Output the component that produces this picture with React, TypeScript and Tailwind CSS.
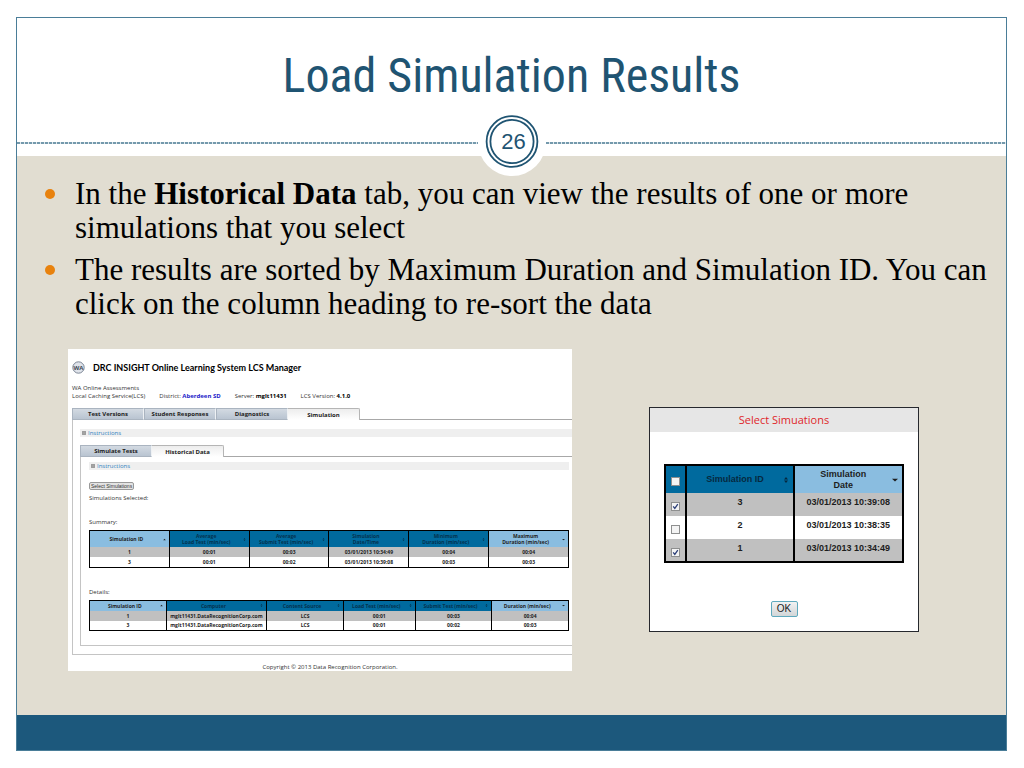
import { useState } from "react";

const summaryHead = [
  ["Simulation ID"],
  ["Average", "Load Test (min/sec)"],
  ["Average", "Submit Test (min/sec)"],
  ["Simulation", "Date/Time"],
  ["Minimum", "Duration (min/sec)"],
  ["Maximum", "Duration (min/sec)"],
];

const summaryRows = [
  ["1", "00:01", "00:03", "03/01/2013 10:34:49", "00:04", "00:04"],
  ["3", "00:01", "00:02", "03/01/2013 10:39:08", "00:03", "00:03"],
];

const detailHead = [
  ["Simulation ID"],
  ["Computer"],
  ["Content Source"],
  ["Load Test (min/sec)"],
  ["Submit Test (min/sec)"],
  ["Duration (min/sec)"],
];

const detailRows = [
  ["1", "mglt11431.DataRecognitionCorp.com", "LCS", "00:01", "00:03", "00:04"],
  ["3", "mglt11431.DataRecognitionCorp.com", "LCS", "00:01", "00:02", "00:03"],
];

const Arrow = ({ kind, className }: { kind: string; className: string }) => (
  <svg className={className} viewBox="0 0 6 6" fill="currentColor">
    {kind === "up" && <path d="M0.5 4.5 L3 1.5 L5.5 4.5 Z" />}
    {kind === "down" && <path d="M0 1.8 H6 L3 4.6 Z" />}
    {kind === "both" && <path d="M1 2.6 L3 0 L5 2.6 Z M1 3.4 L3 6 L5 3.4 Z" />}
  </svg>
);

const Dashes = () => (
  <div className="mt-[2px] h-[2px] flex-1 bg-[repeating-linear-gradient(90deg,#7499ac_0_3px,#dfe8ed_3px_4px)]" />
);

const Badge = () => (
  <div className="relative flex size-17 items-center justify-center rounded-full bg-white">
    <svg
      className="absolute inset-0 size-full"
      viewBox="0 0 68 68"
      fill="none"
      stroke="#1f5472"
    >
      <circle cx="34" cy="33.5" r="25.4" strokeWidth="1.8" />
      <circle cx="34" cy="33.5" r="21.6" strokeWidth="1.8" />
    </svg>
    <span className="relative pl-1 font-['Liberation_Sans'] text-[22px] leading-6 text-[#1f5472]">
      26
    </span>
  </div>
);

const Instructions = () => (
  <a
    href="#instructions"
    className="flex h-2 items-center gap-[2px] bg-[#efefef] pl-[2px] text-[6px] leading-2 text-[#2f7fc0]"
  >
    <svg className="size-[4px]" viewBox="0 0 5 5" fill="none" stroke="#555">
      <path d="M0.5 0.5 H4.5 V4.5 H0.5 Z M1 2.5 H4 M2.5 1 V4" strokeWidth="0.7" />
    </svg>
    Instructions
  </a>
);

const Tabs = ({ names, active }: { names: string[]; active: string }) => (
  <div className="flex">
    {names.map((name) => (
      <button
        key={name}
        className={
          name === active
            ? "h-3 w-[72px] rounded-tr-xs border-t border-r border-[#b5b5b5] bg-linear-to-b from-[#ededed] to-white text-[6px] leading-[10px] font-bold text-[#222]"
            : "h-3 w-[72px] border border-r-[#eef1f4] border-[#aab4c0] bg-linear-to-b from-[#d3dae2] to-[#b9c4d1] text-[6px] leading-[10px] font-bold text-[#222]"
        }
      >
        {name}
      </button>
    ))}
    <div className="flex-1 border-b border-[#a8a8a8]" />
  </div>
);

const ResultTable = ({
  label,
  head,
  rows,
  light,
  cols,
}: {
  label: string;
  head: string[][];
  rows: string[][];
  light: number[];
  cols: string[];
}) => (
  <table
    aria-label={label}
    className="w-full table-fixed border-collapse border border-black text-center text-[5px] leading-[6px] font-bold text-[#222]"
  >
    <colgroup>
      {cols.map((c, i) => (
        <col key={i} className={c} />
      ))}
    </colgroup>
    <thead>
      <tr>
        {head.map((lines, i) => (
          <th
            key={i}
            className={
              light.includes(i)
                ? "border-x border-black bg-[#8abde0] p-0"
                : "border-x border-black bg-[#006a9e] p-0 text-[#04324f]"
            }
          >
            <button className="flex w-full items-center py-[2px] pr-[3px] font-bold whitespace-nowrap">
              <span className="flex-1">
                {lines.map((l) => (
                  <span key={l} className="block">
                    {l}
                  </span>
                ))}
              </span>
              <Arrow
                kind={i === 0 ? "up" : i === head.length - 1 ? "down" : "both"}
                className="size-[3px]"
              />
            </button>
          </th>
        ))}
      </tr>
    </thead>
    <tbody>
      {rows.map((row, r) => (
        <tr key={r} className={r % 2 === 0 ? "bg-[#c0c0c0]" : "bg-white"}>
          {row.map((cell, i) => (
            <td
              key={i}
              className="h-[10px] border-x border-black p-0 whitespace-nowrap"
            >
              {cell}
            </td>
          ))}
        </tr>
      ))}
    </tbody>
  </table>
);

const Manager = () => (
  <section className="overflow-hidden bg-white pt-3 pl-1 font-['Open_Sans',sans-serif] text-[6px] leading-2 text-[#333]">
    <div className="flex items-center gap-2">
      <svg className="size-[13px]" viewBox="0 0 13 13">
        <circle cx="6.5" cy="6.5" r="5.7" fill="#dfe3ea" stroke="#7c8695" />
        <text
          x="6.5"
          y="8.6"
          textAnchor="middle"
          fontSize="6"
          fontWeight="bold"
          fill="#3f4957"
        >
          WA
        </text>
      </svg>
      <h2 className="font-[Lato] text-[9px] leading-3 font-bold text-black">
        DRC INSIGHT Online Learning System LCS Manager
      </h2>
    </div>
    <p className="mt-[10px]">WA Online Assessments</p>
    <div className="flex gap-[14px]">
      <span>Local Caching Service(LCS)</span>
      <span>
        District: <b className="text-[#1a1ac8]">Aberdeen SD</b>
      </span>
      <span>
        Server: <b className="text-black">mglt11431</b>
      </span>
      <span>
        LCS Version: <b className="text-black">4.1.0</b>
      </span>
    </div>
    <div className="mt-2">
      <Tabs
        names={["Test Versions", "Student Responses", "Diagnostics", "Simulation"]}
        active="Simulation"
      />
      <div className="border-b border-l border-[#c4c4c4] pt-[9px] pb-2 pl-[7px]">
        <Instructions />
        <div className="mt-2">
          <Tabs
            names={["Simulate Tests", "Historical Data"]}
            active="Historical Data"
          />
          <div className="border-b border-l border-[#c4c4c4] pt-[5px] pr-[3px] pb-[14px] pl-2">
            <Instructions />
            <button className="mt-3 block h-2 rounded-xs border border-[#999] bg-[#e4e4e4] px-[1px] font-['Liberation_Sans',sans-serif] text-[5px] leading-[6px] text-[#333]">
              Select Simulations
            </button>
            <p className="mt-1">Simulations Selected:</p>
            <p className="mt-4 mb-1">Summary:</p>
            <ResultTable
              label="Summary"
              head={summaryHead}
              rows={summaryRows}
              light={[0, 5]}
              cols={["w-1/6", "w-1/6", "w-1/6", "w-1/6", "w-1/6", "w-1/6"]}
            />
            <p className="mt-5 mb-1">Details:</p>
            <ResultTable
              label="Details"
              head={detailHead}
              rows={detailRows}
              light={[0, 5]}
              cols={["w-[16%]", "w-[21%]", "w-[16%]", "w-[15%]", "w-[16%]", "w-[16%]"]}
            />
          </div>
        </div>
      </div>
    </div>
    <p className="mt-2 pl-4 text-center">
      Copyright © 2013 Data Recognition Corporation.
    </p>
  </section>
);

const Check = ({
  label,
  checked,
  onChange,
}: {
  label: string;
  checked: boolean;
  onChange: () => void;
}) => (
  <label className="relative mx-auto mt-1 block size-[9px]">
    <input
      type="checkbox"
      aria-label={label}
      checked={checked}
      onChange={onChange}
      className="block size-[9px] appearance-none border border-[#8e8f8f] bg-[#f4f4f4]"
    />
    {checked && (
      <svg
        className="pointer-events-none absolute inset-0 size-[9px]"
        viewBox="0 0 9 9"
        fill="none"
        stroke="#2c3f78"
        strokeWidth="1.3"
      >
        <path d="M2.2 4.4 L3.8 6.4 L6.8 2.2" />
      </svg>
    )}
  </label>
);

const sims = [
  { id: 3, date: "03/01/2013 10:39:08" },
  { id: 2, date: "03/01/2013 10:38:35" },
  { id: 1, date: "03/01/2013 10:34:49" },
];

const SelectDialog = () => {
  const [picked, setPicked] = useState([3, 1]);
  const toggle = (id: number) =>
    setPicked(
      picked.includes(id) ? picked.filter((p) => p !== id) : [...picked, id],
    );
  const all = picked.length === sims.length;

  return (
    <section className="mt-[58px] self-start border border-[#26282e] bg-white">
      <h2 className="bg-[#e6e6e6] text-center font-['Open_Sans',sans-serif] text-[11px] leading-6 text-[#e0262b]">
        Select Simuations
      </h2>
      <div className="mt-8 px-[14px]">
        <table className="w-full table-fixed border-collapse border-2 border-black text-center font-['Liberation_Sans',sans-serif] text-[9px] leading-[11px] font-bold text-[#1d1d1d]">
          <colgroup>
            <col className="w-[9%]" />
            <col className="w-[45%]" />
            <col className="w-[46%]" />
          </colgroup>
          <thead>
            <tr className="h-7">
              <th className="border-x-2 border-black bg-[#006a9e] p-0">
                <Check
                  label="Select all"
                  checked={all}
                  onChange={() => setPicked(all ? [] : sims.map((s) => s.id))}
                />
              </th>
              <th className="border-x-2 border-black bg-[#006a9e] p-0 text-[#06293f]">
                <button className="flex w-full items-center pr-1 font-bold">
                  <span className="flex-1">Simulation ID</span>
                  <Arrow kind="both" className="size-[6px]" />
                </button>
              </th>
              <th className="border-x-2 border-black bg-[#8abde0] p-0">
                <button className="flex w-full items-center pr-1 font-bold">
                  <span className="flex-1">
                    Simulation
                    <br />
                    Date
                  </span>
                  <Arrow kind="down" className="size-[6px]" />
                </button>
              </th>
            </tr>
          </thead>
          <tbody>
            {sims.map((s, i) => (
              <tr
                key={s.id}
                className={i % 2 === 0 ? "h-[23px] bg-[#c0c0c0]" : "h-[23px] bg-white"}
              >
                <td className="border-x-2 border-black p-0">
                  <Check
                    label={`Simulation ${s.id}`}
                    checked={picked.includes(s.id)}
                    onChange={() => toggle(s.id)}
                  />
                </td>
                <td className="border-x-2 border-black p-0 pb-1">{s.id}</td>
                <td className="border-x-2 border-black p-0 pb-1">{s.date}</td>
              </tr>
            ))}
          </tbody>
        </table>
      </div>
      <div className="mt-[38px] mb-[14px] flex justify-center">
        <button className="h-4 w-[27px] rounded-xs border border-[#5fa9bd] bg-linear-to-b from-[#f2f2f2] to-[#d2d6d8] font-['Liberation_Sans',sans-serif] text-[10px] leading-3 text-[#222]">
          OK
        </button>
      </div>
    </section>
  );
};

const App = () => {
  return (
    <div className="flex min-h-screen flex-col bg-white py-[17px] pr-[17px] pl-4">
      <main className="flex flex-1 flex-col border border-[#4a7d98]">
        <h1 className="pt-7 pb-[2px] text-center font-['Roboto_Condensed','Liberation_Sans',sans-serif] text-[48px] leading-[60px] text-[#1f5472]">
          Load Simulation Results
        </h1>
        <div className="relative z-10 -mb-5 flex items-center">
          <Dashes />
          <Badge />
          <Dashes />
        </div>
        <div className="flex-1 bg-[#e1ddd1] pt-[21px] pb-10">
          <ul className="flex flex-col gap-2 pl-7 font-[Georgia,'Liberation_Serif',serif] text-[31px] leading-[34px] text-black">
            <li className="flex gap-5">
              <span className="mt-3 size-[10px] shrink-0 rounded-full bg-[#e8820e]" />
              <p>
                In the <b>Historical Data</b> tab, you can view the results of
                one or more
                <br />
                simulations that you select
              </p>
            </li>
            <li className="flex gap-5">
              <span className="mt-3 size-[10px] shrink-0 rounded-full bg-[#e8820e]" />
              <p>
                The results are sorted by Maximum Duration and Simulation ID.
                You can
                <br />
                click on the column heading to re-sort the data
              </p>
            </li>
          </ul>
          <div className="mt-7 grid grid-cols-[minmax(0,504fr)_minmax(0,270fr)] gap-[77px] pr-[87px] pl-[51px]">
            <Manager />
            <SelectDialog />
          </div>
        </div>
        <footer className="h-[35px] bg-[#1c587c]" />
      </main>
    </div>
  );
};

export default App;
